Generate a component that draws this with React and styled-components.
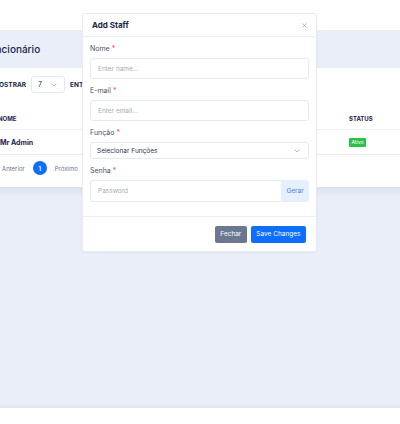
import styled, { createGlobalStyle } from "styled-components";
import { ChevronDown, X } from "lucide-react";

const GlobalStyle = createGlobalStyle`
    html, body {
        margin: 0;
        padding: 0;
        background: #ffffff;
        font-family: Inter, "Noto Sans", sans-serif;
        overflow: hidden;
    }
    * {
        box-sizing: border-box;
    }
`;

export default function App() {
    return (
        <>
            <GlobalStyle />
            <Page>
                <TopBar />
                <Main>
                    <Title>Funcionário</Title>
                    <Card>
                        <Toolbar>
                            <ToolLabel>MOSTRAR</ToolLabel>
                            <PageSize>
                                7
                                <ChevronDown size={8} strokeWidth={2} color="#8a93a6" />
                            </PageSize>
                            <ToolLabel>ENTRADAS</ToolLabel>
                        </Toolbar>
                        <Table>
                            <HeadCell>NOME</HeadCell>
                            <HeadCell>STATUS</HeadCell>
                            <Cell $bold>Mr Admin</Cell>
                            <Cell>
                                <Badge>Ativo</Badge>
                            </Cell>
                        </Table>
                        <Pager>
                            <PagerLink>Anterior</PagerLink>
                            <PageDot>1</PageDot>
                            <PagerLink>Próximo</PagerLink>
                        </Pager>
                    </Card>
                </Main>

                <Modal>
                    <ModalHeader>
                        <ModalTitle>Add Staff</ModalTitle>
                        <CloseButton>
                            <X size={7} strokeWidth={2.2} color="#8d95a5" />
                        </CloseButton>
                    </ModalHeader>
                    <ModalBody>
                        <Field>
                            <Label>Nome<Req>*</Req></Label>
                            <Input placeholder="Enter name..." />
                        </Field>
                        <Field>
                            <Label>E-mail<Req>*</Req></Label>
                            <Input placeholder="Enter email..." />
                        </Field>
                        <Field>
                            <Label>Função<Req>*</Req></Label>
                            <Select>
                                Selecionar Funções
                                <ChevronDown size={8} strokeWidth={2} color="#8a93a6" />
                            </Select>
                        </Field>
                        <Field>
                            <Label>Senha<Req>*</Req></Label>
                            <InputGroup>
                                <GroupInput placeholder="Password" />
                                <Addon>Gerar</Addon>
                            </InputGroup>
                        </Field>
                    </ModalBody>
                    <ModalFooter>
                        <Button $variant="secondary">Fechar</Button>
                        <Button>Save Changes</Button>
                    </ModalFooter>
                </Modal>
            </Page>
        </>
    );
}

const Page = styled.div`
    position: relative;
    width: 400px;
    height: 424px;
    overflow: hidden;
`;

const TopBar = styled.div`
    height: 30px;
    background: #ffffff;
`;

const Main = styled.div`
    height: 378px;
    margin: 0 -20px;
    background: linear-gradient(to bottom, #eaeef9 calc(100% - 6px), #e1e5f0);
`;

const Title = styled.h1`
    margin: 0;
    height: 38px;
    padding-left: 4px;
    display: flex;
    align-items: center;
    font-size: 10px;
    font-weight: 500;
    color: #1b2546;
`;

const Card = styled.div`
    background: #ffffff;
    padding: 8px 14px 12px;
    box-shadow: 0 4px 7px rgba(40, 55, 100, 0.09);
`;

const Toolbar = styled.div`
    display: flex;
    align-items: center;
    gap: 5px;
    height: 17px;
    margin-left: -1px;
`;

const ToolLabel = styled.span`
    font-size: 6.5px;
    font-weight: 700;
    color: #1b2546;
`;

const PageSize = styled.div`
    width: 34px;
    height: 17px;
    border: 1px solid #e4e7ee;
    border-radius: 3px;
    display: flex;
    align-items: center;
    justify-content: space-between;
    padding: 0 6px 0 6px;
    font-size: 7px;
    color: #1b2546;
`;

const Table = styled.div`
    display: grid;
    grid-template-columns: 1fr 61px;
    margin-top: 15px;
`;

const HeadCell = styled.div`
    height: 22px;
    display: flex;
    align-items: center;
    padding-left: 4px;
    font-size: 6px;
    font-weight: 700;
    color: #1b2546;
    border-bottom: 1px solid #eceef3;
`;

const Cell = styled.div`
    height: 25px;
    display: flex;
    align-items: center;
    padding-left: ${(p) => (p.$bold ? "6px" : "4px")};
    font-size: 7px;
    font-weight: ${(p) => (p.$bold ? 700 : 400)};
    color: #1b2546;
    border-bottom: 1px solid #eceef3;
`;

const Badge = styled.span`
    background: #2cc24a;
    color: #ffffff;
    font-size: 5px;
    padding: 1.5px 2.5px;
    border-radius: 1px;
`;

const Pager = styled.div`
    display: flex;
    align-items: center;
    gap: 8px;
    margin-top: 6px;
    padding-left: 8px;
`;

const PagerLink = styled.span`
    font-size: 6px;
    color: #6c7590;
`;

const PageDot = styled.span`
    width: 14px;
    height: 14px;
    border-radius: 50%;
    background: #0d6efd;
    color: #ffffff;
    font-size: 6px;
    font-weight: 600;
    display: flex;
    align-items: center;
    justify-content: center;
`;

const Modal = styled.div`
    position: absolute;
    left: 82px;
    top: 13px;
    width: 235px;
    background: #ffffff;
    border: 1px solid #e8eaef;
    border-radius: 3px;
    box-shadow: 0 1px 3px rgba(30, 40, 70, 0.04);
`;

const ModalHeader = styled.div`
    height: 23px;
    display: flex;
    align-items: center;
    justify-content: space-between;
    padding: 0 8px 0 9px;
    border-bottom: 1px solid #eceef3;
`;

const ModalTitle = styled.h5`
    margin: 0;
    font-size: 8px;
    font-weight: 700;
    color: #1b2546;
`;

const CloseButton = styled.span`
    display: flex;
    align-items: center;
`;

const ModalBody = styled.div`
    padding: 8px 7px 7px;
    display: flex;
    flex-direction: column;
    gap: 8px;
`;

const Field = styled.div`
    display: flex;
    flex-direction: column;
    gap: 5px;
`;

const Label = styled.label`
    font-size: 7px;
    line-height: 8px;
    color: #4a5268;
`;

const Req = styled.span`
    color: #f0506e;
    margin-left: 2px;
`;

const Input = styled.input`
    height: 21px;
    width: 100%;
    border: 1px solid #e6e9ef;
    border-radius: 3px;
    padding: 0 7px;
    font-family: inherit;
    font-size: 6.5px;
    color: #1b2546;
    outline: none;
    &::placeholder {
        color: #a3aabb;
    }
`;

const Select = styled.div`
    height: 17px;
    border: 1px solid #e6e9ef;
    border-radius: 3px;
    padding: 0 7px 0 6px;
    display: flex;
    align-items: center;
    justify-content: space-between;
    font-size: 6.5px;
    color: #2b3350;
`;

const InputGroup = styled.div`
    display: flex;
    height: 22px;
`;

const GroupInput = styled(Input)`
    height: 22px;
    border-radius: 3px 0 0 3px;
    border-right: none;
    flex: 1;
`;

const Addon = styled.span`
    width: 28px;
    background: #e5effd;
    color: #3f7fe0;
    font-size: 6.5px;
    display: flex;
    align-items: center;
    justify-content: center;
    border-radius: 0 3px 3px 0;
`;

const ModalFooter = styled.div`
    height: 35px;
    border-top: 1px solid #eceef3;
    display: flex;
    align-items: center;
    justify-content: flex-end;
    gap: 4px;
    padding: 0 10px;
    margin-top: 7px;
`;

const Button = styled.button`
    height: 17px;
    padding: 0 5.5px;
    border: none;
    border-radius: 2px;
    font-family: inherit;
    font-size: 6.5px;
    color: #ffffff;
    background: ${(p) => (p.$variant === "secondary" ? "#6b788f" : "#0d6efd")};
`;
